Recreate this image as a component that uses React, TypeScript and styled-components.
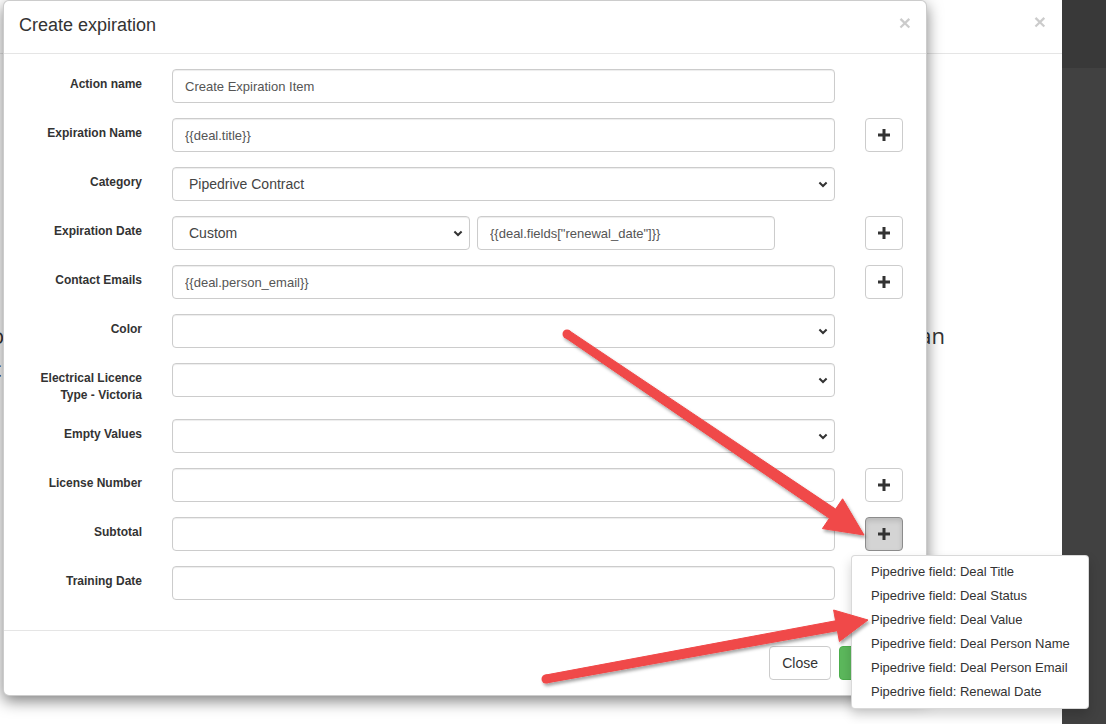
import React from "react";
import styled, { createGlobalStyle, css } from "styled-components";

const GlobalStyle = createGlobalStyle`
  html, body {
    margin: 0;
    padding: 0;
  }
  body {
    width: 1106px;
    height: 724px;
    overflow: hidden;
    background: #fff;
    font-family: "Liberation Sans", Arial, sans-serif;
    color: #333;
  }
  * {
    box-sizing: border-box;
  }
`;

const Page = styled.div`
  position: relative;
  display: flex;
  width: 1106px;
  height: 724px;
  overflow: hidden;
`;

/* the modal that sits behind */
const BackModal = styled.div`
  width: 1062px;
  height: 724px;
  background: #fff;
  border-top-right-radius: 6px;
`;

const BackHeader = styled.div`
  height: 54px;
  border-bottom: 1px solid #e5e5e5;
  display: flex;
  justify-content: flex-end;
  align-items: center;
  padding: 0 16px 10px 0;
`;

const BackBody = styled.div`
  padding-top: 265px;
  font-family: "Open Sans", "Liberation Sans", sans-serif;
  font-size: 22px;
  line-height: 33px;
  color: #333;
`;

const BackLine = styled.div<{ $width?: number }>`
  display: flex;
  justify-content: space-between;
  margin-left: -9px;
  width: ${(p) => (p.$width ? `${p.$width}px` : "auto")};
  white-space: nowrap;
`;

const DarkStrip = styled.div`
  flex: 1;
  background: #414141;
`;

const DarkTop = styled.div`
  height: 68px;
  background: #393939;
`;

const CloseX = styled.span`
  font-family: "Liberation Sans", Arial, sans-serif;
  font-size: 21px;
  font-weight: bold;
  line-height: 1;
  color: #000;
  opacity: 0.2;
`;

/* front modal */
const Modal = styled.div`
  position: absolute;
  top: 0;
  left: 3px;
  width: 924px;
  z-index: 2;
  background: #fff;
  border: 1px solid rgba(0, 0, 0, 0.2);
  border-radius: 6px;
  box-shadow: 0 5px 15px rgba(0, 0, 0, 0.5);
`;

const ModalHeader = styled.div`
  height: 53px;
  border-bottom: 1px solid #e5e5e5;
  display: flex;
  align-items: center;
  justify-content: space-between;
  padding: 0 15px 3px;

  ${CloseX} {
    margin-bottom: 6px;
  }
`;

const Title = styled.h4`
  margin: 0;
  font-size: 18px;
  font-weight: normal;
  line-height: 1.1;
  color: #333;
`;

const ModalBody = styled.div`
  padding: 15px;
`;

const Row = styled.div`
  display: grid;
  grid-template-columns: 123px 663px 38px;
  column-gap: 30px;
  align-items: start;
  margin-bottom: 15px;
`;

const Label = styled.label`
  padding-top: 7px;
  font-size: 12px;
  font-weight: bold;
  line-height: 17px;
  text-align: right;
  color: #333;
`;

const fieldBox = css`
  height: 34px;
  border: 1px solid #ccc;
  border-radius: 4px;
  background: #fff;
  box-shadow: inset 0 1px 1px rgba(0, 0, 0, 0.075);
`;

const Input = styled.input<{ $width?: number }>`
  ${fieldBox};
  display: block;
  width: ${(p) => (p.$width ? `${p.$width}px` : "100%")};
  padding: 6px 12px;
  font-family: "Liberation Sans", Arial, sans-serif;
  font-size: 13px;
  color: #555;
  outline: none;
`;

const SelectBox = styled.div<{ $width?: number }>`
  ${fieldBox};
  display: flex;
  align-items: center;
  justify-content: space-between;
  width: ${(p) => (p.$width ? `${p.$width}px` : "100%")};
  padding: 0 6px 0 16px;
  font-size: 14px;
  color: #444;
`;

const Pair = styled.div`
  display: flex;
  gap: 7px;
`;

const PlusWrap = styled.div`
  position: relative;
`;

const PlusButton = styled.button<{ $active?: boolean }>`
  display: flex;
  align-items: center;
  justify-content: center;
  width: 38px;
  height: 34px;
  padding: 0;
  border: 1px solid #ccc;
  border-radius: 4px;
  background: #fff;
  ${(p) =>
    p.$active &&
    css`
      background: #d4d4d4;
      border-color: #8c8c8c;
      box-shadow: inset 0 3px 5px rgba(0, 0, 0, 0.125);
    `}
`;

const Menu = styled.ul`
  position: absolute;
  top: 38px;
  left: -14px;
  z-index: 5;
  width: 238px;
  margin: 0;
  padding: 4px 0;
  list-style: none;
  background: #fff;
  border: 1px solid rgba(0, 0, 0, 0.15);
  border-radius: 4px;
  box-shadow: 0 6px 12px rgba(0, 0, 0, 0.175);
`;

const MenuItem = styled.li`
  padding: 0 19px;
  font-size: 13px;
  line-height: 24px;
  color: #333;
  white-space: nowrap;
`;

const ModalFooter = styled.div`
  display: flex;
  justify-content: flex-end;
  gap: 8px;
  padding: 15px;
  border-top: 1px solid #e5e5e5;
`;

const Button = styled.button<{ $primary?: boolean }>`
  height: 34px;
  padding: 6px 12px;
  font-family: "Liberation Sans", Arial, sans-serif;
  font-size: 14px;
  border-radius: 4px;
  border: 1px solid #ccc;
  background: #fff;
  color: #333;
  ${(p) =>
    p.$primary &&
    css`
      width: 72px;
      background: #5cb85c;
      border-color: #4cae4c;
      color: #fff;
    `}
`;

const Overlay = styled.svg`
  position: absolute;
  inset: 0;
  z-index: 10;
  pointer-events: none;
`;

const Chevron = () => (
  <svg width="10" height="7" viewBox="0 0 10 7">
    <path d="M1.4 1.5 5 5 8.6 1.5" fill="none" stroke="#333" strokeWidth="2" />
  </svg>
);

const Plus = () => (
  <svg width="12" height="12" viewBox="0 0 12 12">
    <path d="M4.5 0h3v4.5H12v3H7.5V12h-3V7.5H0v-3h4.5z" fill="#333" />
  </svg>
);

type Field = {
  label: string;
  kind: "input" | "select" | "date";
  value?: string;
  plus?: boolean;
  active?: boolean;
};

const fields: Field[] = [
  { label: "Action name", kind: "input", value: "Create Expiration Item" },
  { label: "Expiration Name", kind: "input", value: "{{deal.title}}", plus: true },
  { label: "Category", kind: "select", value: "Pipedrive Contract" },
  { label: "Expiration Date", kind: "date", plus: true },
  { label: "Contact Emails", kind: "input", value: "{{deal.person_email}}", plus: true },
  { label: "Color", kind: "select" },
  { label: "Electrical Licence Type - Victoria", kind: "select" },
  { label: "Empty Values", kind: "select" },
  { label: "License Number", kind: "input", plus: true },
  { label: "Subtotal", kind: "input", plus: true, active: true },
  { label: "Training Date", kind: "input" },
];

const menuItems = [
  "Pipedrive field: Deal Title",
  "Pipedrive field: Deal Status",
  "Pipedrive field: Deal Value",
  "Pipedrive field: Deal Person Name",
  "Pipedrive field: Deal Person Email",
  "Pipedrive field: Renewal Date",
];

const arrowPoints = (
  x1: number,
  y1: number,
  x2: number,
  y2: number,
  tail: number,
  shaft: number,
  headLen: number,
  headW: number
) => {
  const len = Math.hypot(x2 - x1, y2 - y1);
  const ux = (x2 - x1) / len;
  const uy = (y2 - y1) / len;
  const px = -uy;
  const py = ux;
  const bx = x2 - ux * headLen;
  const by = y2 - uy * headLen;
  const pts = [
    [x1 + (px * tail) / 2, y1 + (py * tail) / 2],
    [bx + (px * shaft) / 2, by + (py * shaft) / 2],
    [bx + (px * headW) / 2, by + (py * headW) / 2],
    [x2, y2],
    [bx - (px * headW) / 2, by - (py * headW) / 2],
    [bx - (px * shaft) / 2, by - (py * shaft) / 2],
    [x1 - (px * tail) / 2, y1 - (py * tail) / 2],
  ];
  return pts.map((p) => p.map((v) => v.toFixed(1)).join(",")).join(" ");
};

const arrows = [
  { x1: 567, y1: 334, x2: 864, y2: 535, tail: 8, shaft: 11, headLen: 38, headW: 36 },
  { x1: 546, y1: 679, x2: 868, y2: 620, tail: 8, shaft: 10, headLen: 32, headW: 32 },
];

const FieldControl: React.FC<{ field: Field }> = ({ field }) => {
  if (field.kind === "select") {
    return (
      <SelectBox>
        <span>{field.value}</span>
        <Chevron />
      </SelectBox>
    );
  }
  if (field.kind === "date") {
    return (
      <Pair>
        <SelectBox $width={298}>
          <span>Custom</span>
          <Chevron />
        </SelectBox>
        <Input $width={298} readOnly value={'{{deal.fields["renewal_date"]}}'} />
      </Pair>
    );
  }
  return <Input readOnly value={field.value ?? ""} />;
};

const App: React.FC = () => {
  return (
    <Page>
      <GlobalStyle />
      <BackModal>
        <BackHeader>
          <CloseX>×</CloseX>
        </BackHeader>
        <BackBody>
          <BackLine $width={954}>
            <span>o</span>
            <span>plan</span>
          </BackLine>
          <BackLine>
            <span>c</span>
          </BackLine>
        </BackBody>
      </BackModal>
      <DarkStrip>
        <DarkTop />
      </DarkStrip>

      <Modal>
        <ModalHeader>
          <Title>Create expiration</Title>
          <CloseX>×</CloseX>
        </ModalHeader>
        <ModalBody>
          {fields.map((f) => (
            <Row key={f.label}>
              <Label>{f.label}</Label>
              <FieldControl field={f} />
              {f.plus ? (
                <PlusWrap>
                  <PlusButton $active={f.active}>
                    <Plus />
                  </PlusButton>
                  {f.active && (
                    <Menu>
                      {menuItems.map((m) => (
                        <MenuItem key={m}>{m}</MenuItem>
                      ))}
                    </Menu>
                  )}
                </PlusWrap>
              ) : (
                <div />
              )}
            </Row>
          ))}
        </ModalBody>
        <ModalFooter>
          <Button>Close</Button>
          <Button $primary>Create</Button>
        </ModalFooter>
      </Modal>

      <Overlay width="1106" height="724" viewBox="0 0 1106 724">
        <defs>
          <filter id="arrow-shadow" x="-10%" y="-10%" width="120%" height="130%">
            <feDropShadow dx="1.5" dy="2.5" stdDeviation="1.8" floodColor="#000" floodOpacity="0.35" />
          </filter>
        </defs>
        {arrows.map((a, i) => (
          <g key={i} filter="url(#arrow-shadow)" fill="#f04848">
            <polygon
              points={arrowPoints(a.x1, a.y1, a.x2, a.y2, a.tail, a.shaft, a.headLen, a.headW)}
              stroke="#f04848"
              strokeWidth="1"
              strokeLinejoin="round"
            />
            <circle cx={a.x1} cy={a.y1} r={a.tail / 2 + 0.5} />
          </g>
        ))}
      </Overlay>
    </Page>
  );
};

export default App;
